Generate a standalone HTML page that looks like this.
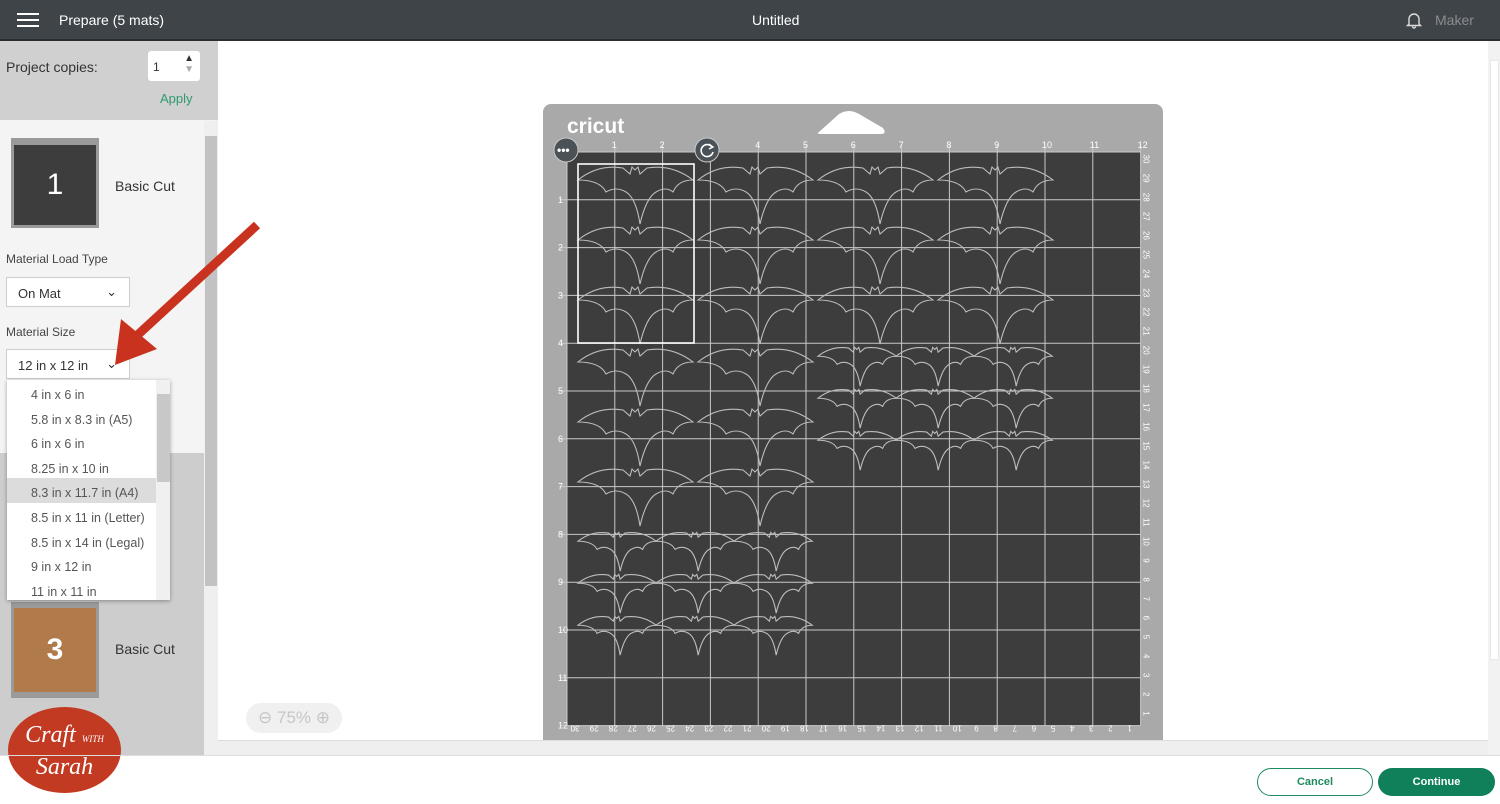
<!DOCTYPE html>
<html><head><meta charset="utf-8"><style>
*{box-sizing:border-box;margin:0;padding:0}
body{width:1500px;height:804px;overflow:hidden;font-family:"Liberation Sans",sans-serif;background:#fff;position:relative}
.top{position:absolute;left:0;top:0;width:1500px;height:41px;background:#3f4449;color:#fff;border-bottom:2px solid #2a2d30}
.top .t{position:absolute;top:12px;font-size:14px}
.side{position:absolute;left:0;top:41px;width:218px;height:714px;background:#f4f4f4}
.abs{position:absolute}
.sel{position:absolute;background:#fff;border:1px solid #ccc;font-size:13px;color:#333;padding:8px 11px}
.dd{position:absolute;left:7px;top:380px;width:163px;height:220px;background:#fff;box-shadow:0 1px 4px rgba(0,0,0,.35);overflow:hidden}
.dd div{height:24.6px;line-height:30px;padding-left:24px;font-size:12.5px;color:#555;width:149px}
.btn{position:absolute;top:768px;height:28px;border-radius:14px;font-size:11px;font-weight:bold;text-align:center;line-height:26px}
</style></head><body>
<div class="top">
 <div class="abs" style="left:17px;top:13px;width:22px;height:2px;background:#fff;box-shadow:0 6px 0 #fff,0 12px 0 #fff"></div>
 <div class="t" style="left:59px">Prepare (5 mats)</div>
 <div class="t" style="left:752px">Untitled</div>
 <svg class="abs" style="left:1405px;top:11px" width="18" height="18" viewBox="0 0 18 18"><path d="M4 13V8a5 5 0 0 1 10 0v5l1.5 1.5h-13z M7.5 15.5a1.5 1.5 0 0 0 3 0" fill="none" stroke="#ddd" stroke-width="1.4"/></svg>
 <div class="t" style="left:1435px;color:#8a8d90">Maker</div>
</div>
<div class="side">
 <div class="abs" style="left:0;top:0;width:218px;height:79px;background:#d0d0d0"></div>
 <div class="abs" style="left:6px;top:18px;font-size:14px;color:#333">Project copies:</div>
 <div class="abs" style="left:148px;top:10px;width:52px;height:30px;background:#fff;border-radius:3px;font-size:12px;padding:9px 5px;color:#333">1<span style="position:absolute;right:6px;top:2px;font-size:10px">▲<br><span style="color:#aaa">▼</span></span></div>
 <div class="abs" style="left:160px;top:50px;font-size:13px;color:#2e9a6e">Apply</div>
 <div class="abs" style="left:204px;top:80px;width:14px;height:634px;background:#efefef"></div>
 <div class="abs" style="left:205px;top:95px;width:12px;height:450px;background:#c2c2c2"></div>
 <div class="abs" style="left:0;top:412px;width:204px;height:302px;background:#cdcdcd"></div>
 <div class="abs" style="left:11px;top:97px;width:88px;height:90px;background:#9a9a9a"></div>
 <div class="abs" style="left:14px;top:104px;width:82px;height:80px;background:#3d3d3d;color:#fff;font-size:30px;text-align:center;line-height:80px">1</div>
 <div class="abs" style="left:115px;top:137px;font-size:14px;color:#333">Basic Cut</div>
 <div class="abs" style="left:6px;top:211px;font-size:12px;color:#444">Material Load Type</div>
 <div class="sel" style="left:6px;top:236px;width:124px;height:30px">On Mat<span style="position:absolute;right:12px;top:6px">⌄</span></div>
 <div class="abs" style="left:6px;top:284px;font-size:12px;color:#444">Material Size</div>
 <div class="sel" style="left:6px;top:308px;width:124px;height:30px">12 in x 12 in<span style="position:absolute;right:12px;top:6px">⌄</span></div>
 <div class="abs" style="left:11px;top:561px;width:88px;height:96px;background:#9a9a9a"></div>
 <div class="abs" style="left:14px;top:567px;width:82px;height:84px;background:#b07a4a;color:#fff;font-size:30px;font-weight:bold;text-align:center;line-height:84px">3</div>
 <div class="abs" style="left:115px;top:600px;font-size:14px;color:#333">Basic Cut</div>
 <div class="abs" style="left:8px;top:666px;width:113px;height:86px;border-radius:50%;background:#c33a22;color:#fff;font-family:'Liberation Serif',serif;font-style:italic;font-size:24px;text-align:center;line-height:28px;padding-top:14px">Craft <span style="font-size:9px">WITH</span><br>Sarah</div>
</div>
<div class="dd">
 <div>4 in x 6 in</div><div>5.8 in x 8.3 in (A5)</div><div>6 in x 6 in</div><div>8.25 in x 10 in</div>
 <div style="background:#dcdcdc">8.3 in x 11.7 in (A4)</div><div>8.5 in x 11 in (Letter)</div><div>8.5 in x 14 in (Legal)</div><div>9 in x 12 in</div><div>11 in x 11 in</div>
 <div class="abs" style="left:149px;top:0;width:14px;height:220px;background:#f0f0f0"></div>
 <div class="abs" style="left:150px;top:14px;width:12px;height:88px;background:#c8c8c8"></div>
</div>
<svg class="abs" style="left:85px;top:215px" width="180" height="160"><path d="M172 10 L45 127" stroke="#c8321e" stroke-width="9"/><path d="M30 150 L36 104 L72 134 Z" fill="#c8321e"/></svg>
<div class="abs" style="left:1488px;top:41px;width:12px;height:714px;background:#f2f2f2"></div>
<div class="abs" style="left:1490px;top:60px;width:9px;height:600px;background:#fff;border:1px solid #e8e8e8"></div>
<div class="abs" style="left:218px;top:740px;width:1270px;height:15px;background:#efefef;border-top:1px solid #ddd"></div>
<div class="abs" style="left:0;top:755px;width:1500px;height:1px;background:#ddd"></div>
<div class="abs" style="left:246px;top:703px;width:96px;height:30px;border-radius:15px;background:#f0f0f0;color:#c6c6c6;font-size:17px;line-height:30px;text-align:center">⊖ 75% ⊕</div>
<svg id="mat" class="abs" style="left:543px;top:104px" width="620" height="636"></svg>
<div class="btn" style="left:1257px;width:116px;border:1px solid #1f8a5d;color:#1f8a5d;background:#fff">Cancel</div>
<div class="btn" style="left:1378px;width:117px;background:#10805a;color:#fff;line-height:28px">Continue</div>
<script>
const s=document.getElementById('mat');let h='';
h+='<rect x="0" y="0" width="620" height="660" rx="8" fill="#a9a9a9"/>';
h+='<text x="24" y="29" font-family="Liberation Sans" font-weight="bold" font-size="21" fill="#fff">cricut</text>';
h+='<path d="M276 28 L296 10 Q306 4 316 10 L340 24 Q344 30 338 30 L280 30 Q272 30 276 28Z" fill="#fff"/>';
const gx=24,gy=48,c=47.8,cm=c*12/30;
h+='<rect x="'+gx+'" y="'+gy+'" width="'+(c*12)+'" height="'+(c*12)+'" fill="#3d3d3d"/>';
for(let i=0;i<=12;i++){h+='<line x1="'+(gx+i*c)+'" y1="'+(gy-8)+'" x2="'+(gx+i*c)+'" y2="'+(gy+12*c)+'" stroke="#c9c9c9" stroke-width="1"/>';
h+='<line x1="'+(gx-8)+'" y1="'+(gy+i*c)+'" x2="'+(gx+12*c)+'" y2="'+(gy+i*c)+'" stroke="#c9c9c9" stroke-width="1"/>';
if(i>0){h+='<text x="'+(gx+i*c-3)+'" y="'+(gy-4)+'" font-size="9" fill="#fff" font-family="Liberation Sans">'+i+'</text>';
h+='<text x="'+(gx-9)+'" y="'+(gy+i*c+3)+'" font-size="9" fill="#fff" font-family="Liberation Sans">'+i+'</text>';}}
for(let i=0;i<30;i++){const bx=gx+8+i*cm, by=gy+12*c+6;
h+='<text x="'+bx+'" y="'+by+'" font-size="8" fill="#fff" text-anchor="middle" transform="rotate(180 '+bx+' '+(by-3)+')">'+(30-i)+'</text>';
const rx=gx+12*c+6, ry=gy+10+i*cm;
h+='<text x="'+rx+'" y="'+ry+'" font-size="8" fill="#fff" text-anchor="middle" transform="rotate(90 '+rx+' '+(ry-3)+')">'+(30-i)+'</text>';}
function bat(x,y,sc){return '<path transform="translate('+x+' '+y+') scale('+sc+')" d="M0 18 Q20 2 45 6 L52 12 L54 5 L57 8 L60 5 L62 12 L69 6 Q94 2 115 18 Q100 18 95 30 Q88 24 78 30 Q68 36 62 62 Q58 36 48 30 Q38 24 28 30 Q22 18 0 18Z" fill="none" stroke="#bdbdbd" stroke-width="'+(1.1/sc)+'"/>';}
for(let r=0;r<3;r++)for(let k=0;k<4;k++)h+=bat(35+k*120,58+r*60,1);
for(let r=0;r<3;r++)for(let k=0;k<2;k++)h+=bat(35+k*120,240+r*60,1);
for(let r=0;r<3;r++)for(let k=0;k<3;k++)h+=bat(275+k*78,240+r*42,0.68);
for(let r=0;r<3;r++)for(let k=0;k<3;k++)h+=bat(35+k*78,425+r*42,0.68);
h+='<rect x="35" y="60" width="116" height="179" fill="none" stroke="#fff" stroke-width="1.6"/>';
h+='<circle cx="23" cy="46" r="12" fill="#4a5258" stroke="#c9c9c9"/><text x="14" y="50" fill="#fff" font-size="12" font-weight="bold">•••</text>';
h+='<circle cx="164" cy="46" r="12" fill="#4a5258" stroke="#c9c9c9"/><path d="M169 43 A6 6 0 1 0 170 48" fill="none" stroke="#fff" stroke-width="1.6"/><path d="M166 40 L170 43 L166 45" fill="none" stroke="#fff" stroke-width="1.4"/>';
s.innerHTML=h;
</script>
</body></html>
